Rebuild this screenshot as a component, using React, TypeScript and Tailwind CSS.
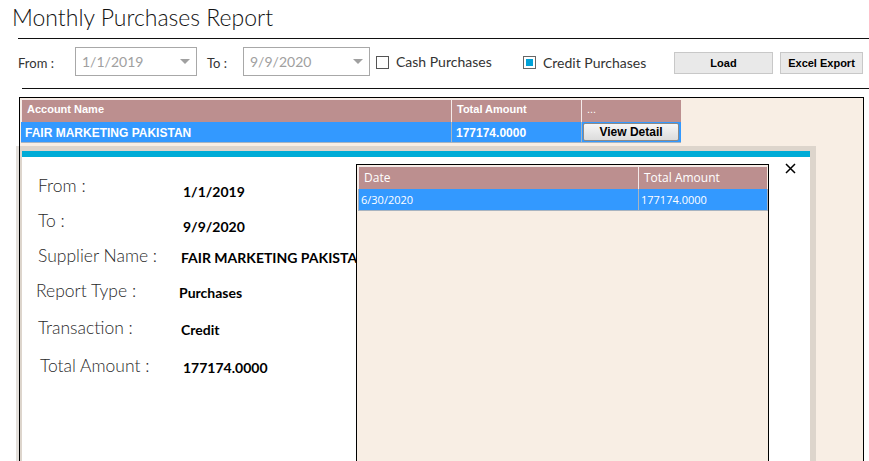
import React from "react";

const details = [
  { label: "From :", value: "1/1/2019", row: "h-[35px]", lab: "pl-[16px] w-[161px] mt-[17px]", val: "mt-[25px]" },
  { label: "To :", value: "9/9/2020", row: "h-[35px]", lab: "pl-[16px] w-[161px] mt-[17px]", val: "mt-[25px]" },
  { label: "Supplier Name :", value: "FAIR MARKETING PAKISTAN", row: "h-[35px]", lab: "pl-[16px] w-[159px] mt-[17px]", val: "mt-[21px]" },
  { label: "Report Type :", value: "Purchases", row: "h-[36px]", lab: "pl-[14px] w-[157px] mt-[17px]", val: "mt-[21px]" },
  { label: "Transaction :", value: "Credit", row: "h-[38px]", lab: "pl-[16px] w-[159px] mt-[18px]", val: "mt-[22px]" },
  { label: "Total Amount :", value: "177174.0000", row: "h-[38px]", lab: "pl-[18px] w-[161px] mt-[18px]", val: "mt-[22px]" },
];

function Combo({ value, width }: { value: string; width: string }) {
  return (
    <div className={`${width} h-[29px] mt-[8px] border border-[#a8a8a8] bg-white flex items-center justify-between pl-[6px] pr-[6px]`}>
      <span className="text-[14px] text-[#a0a0a0]">{value}</span>
      <span className="w-0 h-0 border-x-[5px] border-x-transparent border-t-[5px] border-t-[#a0a0a0]" />
    </div>
  );
}

export default function App() {
  return (
    <div className="w-[869px] h-[461px] overflow-hidden bg-white font-['Lato',sans-serif] text-[#222]">
      <h1 className="h-[38px] pl-[12px] pt-[1px] text-[23px] font-light leading-[32px] text-[#111]">
        Monthly Purchases Report
      </h1>
      <div className="ml-[18px] h-px bg-[#111]" />

      {/* filter row */}
      <div className="h-[49px] flex items-start">
        <span className="ml-[18px] w-[57px] mt-[14px] text-[13px] leading-[20px] text-[#333]">From :</span>
        <Combo value="1/1/2019" width="w-[122px]" />
        <span className="ml-[10px] w-[36px] mt-[14px] text-[13px] leading-[20px] text-[#333]">To :</span>
        <Combo value="9/9/2020" width="w-[127px]" />
        <span className="ml-[6px] mt-[17px] w-[13px] h-[13px] border border-[#555] bg-white" />
        <span className="ml-[7px] w-[127px] mt-[13px] text-[14px] leading-[20px] text-[#333]">Cash Purchases</span>
        <span className="mt-[17px] w-[13px] h-[13px] border border-[#666] bg-white p-[2px]">
          <span className="block w-full h-full bg-[#00a2d8]" />
        </span>
        <span className="ml-[7px] w-[131px] mt-[14px] text-[14px] leading-[20px] text-[#333]">Credit Purchases</span>
        <button className="w-[99px] h-[22px] mt-[13px] border border-[#c8c8c8] bg-[#e9e9e9] text-[11px] font-bold font-['Liberation_Sans',Arial,sans-serif] text-black">
          Load
        </button>
        <button className="ml-[7px] w-[83px] h-[22px] mt-[13px] border border-[#c8c8c8] bg-[#e9e9e9] text-[11px] font-bold font-['Liberation_Sans',Arial,sans-serif] text-black">
          Excel Export
        </button>
      </div>
      <div className="ml-[22px] h-px bg-[#111]" />

      {/* main panel */}
      <div className="mt-[8px] ml-[19px] w-[845px] h-[400px] border border-black bg-[#f8eee4] pt-[1px] font-['Liberation_Sans',Arial,sans-serif]">
        <div className="ml-px w-[660px]">
          <div className="flex h-[23px] bg-[#bc8f8f] border-l border-t border-[#f4eaea] text-white text-[11px] font-bold leading-[16px]">
            <div className="w-[430px] border-r border-[#f4eaea] pl-[5px] pt-px">Account Name</div>
            <div className="w-[130px] border-r border-[#f4eaea] pl-[5px] pt-px">Total Amount</div>
            <div className="flex-1 pl-[5px] pt-px font-normal">...</div>
          </div>
          <div className="flex h-[21px] bg-[#3399ff] border-b border-[#a9b4c0] text-white text-[12px] font-bold">
            <div className="w-[431px] border-r border-[#a9b4c0] pl-[4px] leading-[22px]">FAIR MARKETING PAKISTAN</div>
            <div className="w-[130px] border-r border-[#a9b4c0] pl-[4px] leading-[22px]">177174.0000</div>
            <div className="flex-1 pl-px pt-px">
              <button className="w-[96px] h-[18px] rounded-[2px] border border-[#8a8a8a] bg-gradient-to-b from-[#f6f6f6] to-[#dcdcdc] text-[12px] font-bold text-black leading-[16px]">
                View Detail
              </button>
            </div>
          </div>
        </div>

        {/* detail popup */}
        <div className="mt-[3px] ml-[-4px] w-[800px] border-l-[3px] border-[#e3dfdb] bg-[#ddd5cc] shadow-[inset_1px_0_0_#000] pl-[3px] pr-[6px] pt-[5px]">
          <div className="h-[6px] bg-[#00acd7]" />
          <div className="h-[320px] bg-white flex font-['Lato',sans-serif]">
            <div className="w-[334px] overflow-hidden whitespace-nowrap">
              {details.map((d) => (
                <div key={d.label} className={`${d.row} flex items-start`}>
                  <div className={`${d.lab} shrink-0 text-[17.5px] font-light leading-[24px] text-[#2a2a2a]`}>{d.label}</div>
                  <div className={`${d.val} text-[14px] font-bold leading-[20px] text-black`}>{d.value}</div>
                </div>
              ))}
            </div>

            <div className="mt-[7px] w-[413px] h-[320px] border border-black bg-[#f8eee4] pt-px pl-px">
              <div className="flex w-[409px] h-[23px] bg-[#bc8f8f] border-l border-t border-[#f4eaea] text-white text-[12px] font-['Open_Sans',sans-serif]">
                <div className="w-[280px] border-r border-[#f4eaea] pl-[5px] leading-[22px]">Date</div>
                <div className="flex-1 pl-[5px] leading-[22px]">Total Amount</div>
              </div>
              <div className="flex w-[410px] h-[22px] bg-[#3399ff] border border-t-0 border-[#a9b4c0] text-white text-[11px] font-['Open_Sans',sans-serif]">
                <div className="w-[280px] border-r border-[#a9b4c0] pl-[2px] leading-[21px]">6/30/2020</div>
                <div className="flex-1 pl-[2px] leading-[21px]">177174.0000</div>
              </div>
            </div>

            <div className="flex-1 pl-[16px] pt-[6px]">
              <svg width="11" height="11" viewBox="0 0 11 11">
                <path d="M1 1 L10 10 M10 1 L1 10" stroke="#000" strokeWidth="1.5" />
              </svg>
            </div>
          </div>
        </div>
      </div>
    </div>
  );
}
